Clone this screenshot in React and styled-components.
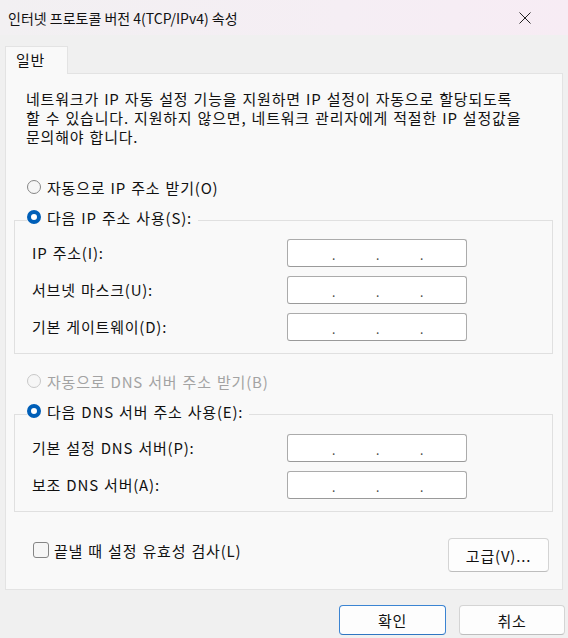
import React from 'react';
import styled, { createGlobalStyle } from 'styled-components';

const GlobalStyle = createGlobalStyle`
  html, body { margin: 0; padding: 0; }
  body {
    background: #f0f0f0;
    font-family: "Noto Sans CJK KR", "Noto Sans", sans-serif;
    color: #111;
  }
`;

const Window = styled.div`
  width: 568px;
  height: 638px;
  display: flex;
  flex-direction: column;
  overflow: hidden;
  background: #f0f0f0;
`;

const TitleBar = styled.div`
  height: 35px;
  flex: none;
  display: flex;
  align-items: center;
  justify-content: space-between;
  padding-left: 8px;
  background: linear-gradient(90deg, #f2f0f2 0%, #f5eef4 60%, #f7ecf4 100%);
`;

const Title = styled.div`
  font-size: 14px;
  line-height: 20px;
  white-space: nowrap;
`;

const CloseBtn = styled.div`
  width: 46px;
  height: 35px;
  display: flex;
  align-items: center;
  justify-content: center;
  margin-right: 20px;
`;

const Body = styled.div`
  padding: 11px 5px 0 5px;
  display: flex;
  flex-direction: column;
`;

const Tabs = styled.div`
  display: flex;
`;

const Tab = styled.div`
  width: 63px;
  height: 28px;
  box-sizing: border-box;
  border: 1px solid #e3e3e3;
  border-bottom: none;
  background: #f9f9f9;
  padding-left: 10px;
  font-size: 15px;
  line-height: 25px;
  letter-spacing: 0.8px;
  margin-bottom: -1px;
  position: relative;
  z-index: 1;
`;

const Panel = styled.div`
  border: 1px solid #e3e3e3;
  background: #f9f9f9;
  padding: 15px 9px 17px 8px;
  display: flex;
  flex-direction: column;
  font-size: 15px;
  letter-spacing: 0.8px;
  word-spacing: 1px;
`;

const Description = styled.p`
  margin: 0 0 0 12px;
  line-height: 19px;
  white-space: nowrap;
`;

const RadioRow = styled.label`
  display: flex;
  align-items: center;
  height: 20px;
  gap: 6px;
  color: ${p => (p.$disabled ? '#a3a3a3' : '#111')};
  margin-left: ${p => p.$indent ?? 13}px;
  margin-top: ${p => p.$top || 0}px;
  white-space: nowrap;
`;

const RadioDot = styled.span`
  width: 14px;
  height: 14px;
  box-sizing: border-box;
  border-radius: 50%;
  flex: none;
  background: ${p => (p.$checked ? '#fff' : '#f6f6f6')};
  border: ${p =>
    p.$checked ? '4px solid #005fb8' : p.$disabled ? '1px solid #c8c8c8' : '1px solid #868686'};
`;

const Group = styled.fieldset`
  margin: ${p => p.$top || 0}px 0 0 0;
  padding: 0 0 ${p => p.$bottom || 11}px 0;
  border: 1px solid #e0e0e0;
  min-width: 0;
`;

const Legend = styled.legend`
  padding: 0 6px 6px 0;
  margin-left: 12px;
`;

const FieldGrid = styled.div`
  display: grid;
  grid-template-columns: 255px 180px;
  row-gap: 9px;
  align-items: center;
  padding-left: 17px;
  margin-top: ${p => p.$top || 6}px;
`;

const FieldLabel = styled.div`
  line-height: 20px;
  white-space: nowrap;
`;

const IpBox = styled.div`
  width: 180px;
  height: 28px;
  box-sizing: border-box;
  border: 1px solid #ababab;
  border-bottom-color: #9a9a9a;
  border-radius: 3px;
  background: #fff;
  display: flex;
  padding-left: 2px;
  letter-spacing: 0;
`;

const IpSeg = styled.span`
  width: 44px;
  display: flex;
  justify-content: flex-end;
  font-size: 12px;
  line-height: 28px;
  color: #444;
`;

const Dot = styled.span`
  width: 2px;
  text-align: center;
  margin-top: 1px;
`;

const BottomRow = styled.div`
  display: flex;
  justify-content: space-between;
  align-items: flex-start;
  margin-top: 26px;
  padding-left: 19px;
  padding-right: 4px;
`;

const CheckRow = styled.label`
  display: flex;
  align-items: center;
  gap: 5px;
  height: 22px;
  margin-top: 1px;
  white-space: nowrap;
`;

const CheckBox = styled.span`
  width: 16px;
  height: 16px;
  box-sizing: border-box;
  border: 1px solid #858585;
  border-radius: 3px;
  background: #f6f6f6;
  flex: none;
`;

const Button = styled.button`
  width: ${p => p.$w || 107}px;
  height: ${p => p.$h || 30}px;
  box-sizing: border-box;
  border: 1px solid ${p => (p.$primary ? '#3b84d2' : '#d4d4d4')};
  border-bottom-color: ${p => (p.$primary ? '#2f76c2' : '#bdbdbd')};
  border-radius: 4px;
  background: #fdfdfd;
  font-family: inherit;
  font-size: 15px;
  letter-spacing: 0.8px;
  color: #111;
  padding: 0;
  cursor: default;
`;

const Footer = styled.div`
  display: flex;
  justify-content: flex-end;
  gap: 13px;
  padding: 15px 0 0 0;
  margin-right: -2px;
`;

function IpField() {
  return (
    <IpBox>
      <IpSeg><Dot>.</Dot></IpSeg>
      <IpSeg><Dot>.</Dot></IpSeg>
      <IpSeg><Dot>.</Dot></IpSeg>
    </IpBox>
  );
}

export default function App() {
  return (
    <>
      <GlobalStyle />
      <Window>
        <TitleBar>
          <Title>인터넷 프로토콜 버전 4(TCP/IPv4) 속성</Title>
          <CloseBtn>
            <svg width="12" height="12" viewBox="0 0 12 12">
              <path d="M0.5 0.5 L11.5 11.5 M11.5 0.5 L0.5 11.5" stroke="#222" strokeWidth="1" fill="none" />
            </svg>
          </CloseBtn>
        </TitleBar>
        <Body>
          <Tabs>
            <Tab>일반</Tab>
          </Tabs>
          <Panel>
            <Description>
              네트워크가 IP 자동 설정 기능을 지원하면 IP 설정이 자동으로 할당되도록
              <br />
              할 수 있습니다. 지원하지 않으면, 네트워크 관리자에게 적절한 IP 설정값을
              <br />
              문의해야 합니다.
            </Description>

            <RadioRow $top={31}>
              <RadioDot />
              자동으로 IP 주소 받기(O)
            </RadioRow>

            <Group $top={10} $bottom={12}>
              <Legend>
                <RadioRow $indent={0}>
                  <RadioDot $checked />
                  다음 IP 주소 사용(S):
                </RadioRow>
              </Legend>
              <FieldGrid>
                <FieldLabel>IP 주소(I):</FieldLabel>
                <IpField />
                <FieldLabel>서브넷 마스크(U):</FieldLabel>
                <IpField />
                <FieldLabel>기본 게이트웨이(D):</FieldLabel>
                <IpField />
              </FieldGrid>
            </Group>

            <RadioRow $top={17} $disabled>
              <RadioDot $disabled />
              자동으로 DNS 서버 주소 받기(B)
            </RadioRow>

            <Group $top={10} $bottom={12}>
              <Legend>
                <RadioRow $indent={0}>
                  <RadioDot $checked />
                  다음 DNS 서버 주소 사용(E):
                </RadioRow>
              </Legend>
              <FieldGrid $top={7}>
                <FieldLabel>기본 설정 DNS 서버(P):</FieldLabel>
                <IpField />
                <FieldLabel>보조 DNS 서버(A):</FieldLabel>
                <IpField />
              </FieldGrid>
            </Group>

            <BottomRow>
              <CheckRow>
                <CheckBox />
                끝낼 때 설정 유효성 검사(L)
              </CheckRow>
              <Button $w={101} $h={34}>고급(V)...</Button>
            </BottomRow>
          </Panel>
          <Footer>
            <Button $primary>확인</Button>
            <Button $w={106}>취소</Button>
          </Footer>
        </Body>
      </Window>
    </>
  );
}
